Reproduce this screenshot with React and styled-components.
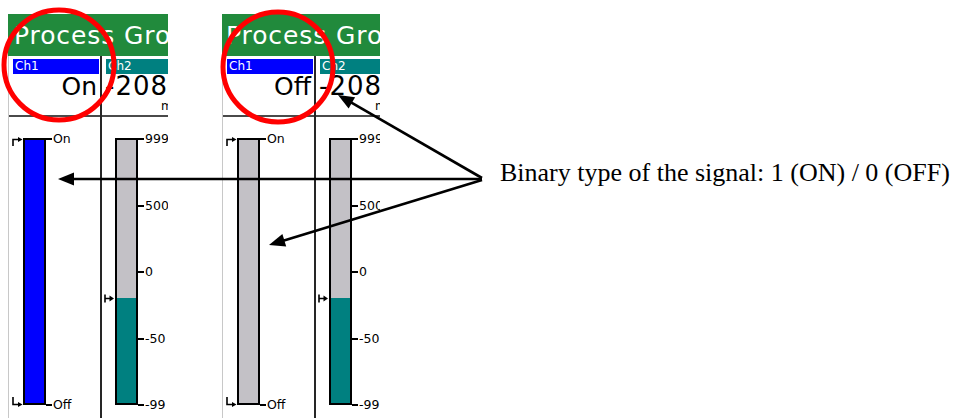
import React from 'react';
import styled, { createGlobalStyle } from 'styled-components';

const GlobalStyle = createGlobalStyle`
  html, body {
    margin: 0;
    padding: 0;
    background: #fff;
  }
  body {
    font-family: "DejaVu Sans", sans-serif;
  }
`;

const Stage = styled.div`
  position: relative;
  width: 964px;
  height: 418px;
  overflow: hidden;
  background: #fff;
`;

const Row = styled.div`
  display: flex;
  align-items: flex-start;
  padding: 14px 0 0 8px;
`;

const Panel = styled.div`
  flex-shrink: 0;
  width: ${p => p.$width}px;
  height: 404px;
  margin-right: ${p => p.$gap}px;
  overflow: hidden;
  display: flex;
  flex-direction: column;
`;

const Header = styled.div`
  height: 42px;
  box-sizing: border-box;
  padding: 2px 0 0 ${p => p.$indent}px;
  background: #218a3c;
  color: #fff;
  font: 25px/40px "DejaVu Sans", sans-serif;
  letter-spacing: 0.9px;
  white-space: nowrap;
`;

const Channels = styled.div`
  flex: 1;
  display: flex;
  border-left: 1px solid #c8c8c8;
`;

const Channel = styled.div`
  flex-shrink: 0;
  width: ${p => p.$width}px;
  display: flex;
  flex-direction: column;
  border-right: ${p => (p.$divider ? '2px solid #262626' : 'none')};
`;

const Readout = styled.div`
  padding: 3px 0 2px;
  border-bottom: 2px solid #4a4a4a;
`;

const Tag = styled.div`
  height: 15px;
  margin: 0 1px 0 ${p => p.$inset}px;
  padding-left: 2px;
  background: ${p => p.$color};
  color: #fff;
  font-size: 12px;
  line-height: 15px;
  white-space: nowrap;
`;

const Value = styled.div`
  height: 25px;
  padding: 0 3px;
  font-size: ${p => p.$size}px;
  line-height: 25px;
  letter-spacing: ${p => p.$tracking}px;
  text-align: ${p => p.$align};
  color: #000;
  white-space: nowrap;
`;

const Unit = styled.div`
  height: 14px;
  padding-left: ${p => p.$indent}px;
  font-size: 12px;
  line-height: 14px;
  white-space: nowrap;
`;

const Chart = styled.div`
  display: flex;
  align-items: flex-start;
  padding-top: 21px;
`;

const MarkerRail = styled.div`
  position: relative;
  flex-shrink: 0;
  width: ${p => p.$width}px;
  height: 267px;
`;

const Marker = styled.svg`
  position: absolute;
  left: ${p => p.$left}px;
  width: 11px;
  height: 9px;
  overflow: visible;
`;

const Bar = styled.div`
  flex-shrink: 0;
  width: 23px;
  height: 267px;
  box-sizing: border-box;
  border: 2px solid #000;
  background: ${p => p.$empty};
  display: flex;
  flex-direction: column;
  justify-content: flex-end;
`;

const Fill = styled.div`
  background: ${p => p.$color};
`;

const Scale = styled.div`
  height: 280px;
  margin-top: -6px;
  display: flex;
  flex-direction: column;
  justify-content: space-between;
`;

const Tick = styled.div`
  display: flex;
  align-items: center;
  height: 14px;
  font-size: 12.5px;
  line-height: 14px;
  color: #000;
  white-space: nowrap;

  &::before {
    content: '';
    width: 6px;
    height: 2px;
    margin-right: 1px;
    background: #000;
  }
`;

const Note = styled.p`
  margin: 145px 0 0 ${p => p.$left}px;
  font: 26px/28px "Liberation Serif", "Times New Roman", serif;
  color: #000;
  white-space: nowrap;
`;

const Overlay = styled.svg`
  position: absolute;
  left: 0;
  top: 0;
  width: 964px;
  height: 418px;
  pointer-events: none;
`;

const RAIL = 267;
const levelY = level => 1 + (1 - level) * (RAIL - 2);

function MarkerIcon({ kind, level, left }) {
  const y = levelY(level);
  if (kind === 'top') {
    return (
      <Marker $left={left} style={{ top: y - 1.5 }} viewBox="0 0 11 9">
        <path d="M1 8V1.5H7" stroke="#000" strokeWidth="1.6" fill="none" />
        <path d="M6 -1L10.5 1.5L6 4Z" fill="#000" />
      </Marker>
    );
  }
  if (kind === 'bottom') {
    return (
      <Marker $left={left} style={{ top: y - 7.5 }} viewBox="0 0 11 9">
        <path d="M1 0V7.5H7" stroke="#000" strokeWidth="1.6" fill="none" />
        <path d="M6 5L10.5 7.5L6 10Z" fill="#000" />
      </Marker>
    );
  }
  return (
    <Marker $left={left} style={{ top: y - 4.5 }} viewBox="0 0 11 9">
      <path d="M1 0.5V8.5M1 4.5H6" stroke="#000" strokeWidth="1.6" fill="none" />
      <path d="M5.5 1.5L10 4.5L5.5 7.5Z" fill="#000" />
    </Marker>
  );
}

function Gauge({ rail, markerLeft, fill, level, empty, ticks, markers }) {
  return (
    <Chart>
      <MarkerRail $width={rail}>
        {markers.map(m => (
          <MarkerIcon key={m.kind} kind={m.kind} level={m.level} left={markerLeft} />
        ))}
      </MarkerRail>
      <Bar $empty={empty}>
        <Fill $color={fill} style={{ height: `${level * 100}%` }} />
      </Bar>
      <Scale>
        {ticks.map(t => (
          <Tick key={t}>{t}</Tick>
        ))}
      </Scale>
    </Chart>
  );
}

function Recorder({ state, width, gap, indent }) {
  const on = state === 'On';
  return (
    <Panel $width={width} $gap={gap}>
      <Header $indent={indent}>Process Group</Header>
      <Channels>
        <Channel $width={91} $divider>
          <Readout>
            <Tag $color="#0000ff" $inset={4}>Ch1</Tag>
            <Value $align="right" $size={25} $tracking={0}>{state}</Value>
            <Unit $indent={0} />
          </Readout>
          <Gauge
            rail={14}
            markerLeft={3}
            fill="#0000ff"
            empty="#c3c1c6"
            level={on ? 1 : 0}
            ticks={['On', 'Off']}
            markers={[
              { kind: 'top', level: 1 },
              { kind: 'bottom', level: 0 },
            ]}
          />
        </Channel>
        <Channel $width={120}>
          <Readout>
            <Tag $color="#008080" $inset={4}>Ch2</Tag>
            <Value $align="left" $size={26} $tracking={1}>-208.8</Value>
            <Unit $indent={59}>mbar</Unit>
          </Readout>
          <Gauge
            rail={13}
            markerLeft={2}
            fill="#008080"
            empty="#c3c1c6"
            level={0.4}
            ticks={['999', '500', '0', '-50', '-99']}
            markers={[{ kind: 'level', level: 0.4 }]}
          />
        </Channel>
      </Channels>
    </Panel>
  );
}

function Arrow({ from, to }) {
  const dx = to[0] - from[0];
  const dy = to[1] - from[1];
  const len = Math.hypot(dx, dy);
  const ux = dx / len;
  const uy = dy / len;
  const head = 16;
  const half = 6.5;
  const bx = to[0] - ux * head;
  const by = to[1] - uy * head;
  const pts = [
    [to[0], to[1]],
    [bx - uy * half, by + ux * half],
    [bx + uy * half, by - ux * half],
  ]
    .map(p => p.join(','))
    .join(' ');
  return (
    <g>
      <line x1={from[0]} y1={from[1]} x2={bx + ux * 2} y2={by + uy * 2} stroke="#000" strokeWidth="2.6" />
      <polygon points={pts} fill="#000" />
    </g>
  );
}

export default function App() {
  return (
    <Stage>
      <GlobalStyle />
      <Row>
        <Recorder state="On" width={160} gap={54} indent={6} />
        <Recorder state="Off" width={158} gap={0} indent={4} />
        <Note $left={120}>Binary type of the signal: 1 (ON) / 0 (OFF)</Note>
      </Row>
      <Overlay viewBox="0 0 964 418">
        <ellipse cx="59" cy="65" rx="55" ry="55" fill="none" stroke="#ff0000" strokeWidth="5" />
        <ellipse cx="278" cy="67" rx="55" ry="55" fill="none" stroke="#ff0000" strokeWidth="5" />
        <Arrow from={[482, 179]} to={[58, 179]} />
        <Arrow from={[482, 178]} to={[338, 95]} />
        <Arrow from={[482, 180]} to={[269, 245]} />
      </Overlay>
    </Stage>
  );
}
